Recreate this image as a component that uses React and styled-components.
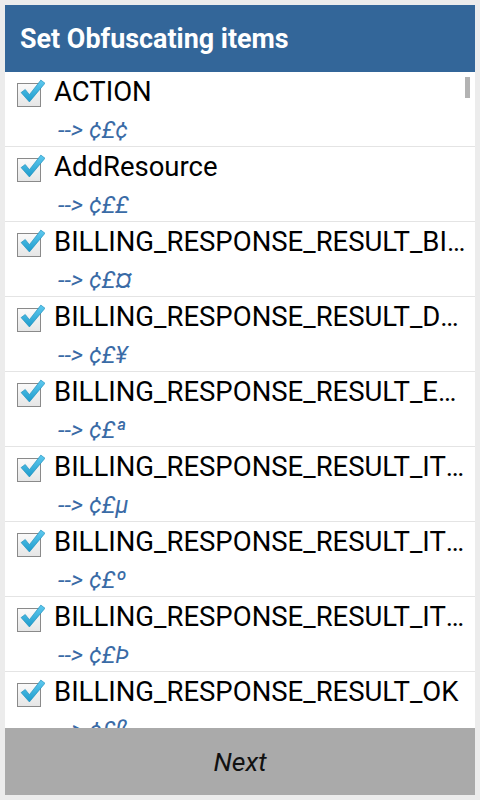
import React from "react";
import styled, { createGlobalStyle } from "styled-components";

const Global = createGlobalStyle`
  html, body { margin: 0; padding: 0; background: #ececec; }
  body { font-family: Roboto, "Noto Sans", sans-serif; }
`;

const Screen = styled.div`
  width: 480px;
  height: 800px;
  box-sizing: border-box;
  padding: 5px;
  display: flex;
  flex-direction: column;
  background: #ececec;
`;

const Header = styled.div`
  height: 67px;
  flex: none;
  background: #336699;
  color: #fff;
  font-weight: 700;
  font-size: 26.9px;
  display: flex;
  align-items: center;
  padding-left: 15px;
  padding-top: 1px;
  box-sizing: border-box;
`;

const ListWrap = styled.div`
  position: relative;
  flex: 1;
  background: #fff;
  overflow: hidden;
`;

const Thumb = styled.div`
  position: absolute;
  right: 5px;
  top: 5px;
  width: 5px;
  height: 21px;
  background: #b3b3b3;
`;

const Row = styled.div`
  height: 74px;
  border-bottom: 1px solid #e4e4e4;
  display: grid;
  grid-template-columns: 49px 1fr;
  grid-template-rows: 38px auto;
  padding-right: 8px;
`;

const Box = styled.div`
  grid-row: 1;
  grid-column: 1;
  position: relative;
  margin: 11px 0 0 12px;
  width: 22px;
  height: 22px;
  border: 1px solid #8a8a8a;
  background: linear-gradient(#fafafa, #e6e6e6);
`;

const Check = styled.svg`
  position: absolute;
  left: 1px;
  top: -6px;
  width: 26px;
  height: 25px;
`;

const Title = styled.div`
  grid-row: 1;
  grid-column: 2;
  font-size: 27.5px;
  color: #000;
  line-height: 38px;
  padding-top: 1px;
  white-space: nowrap;
  overflow: hidden;
  text-overflow: ellipsis;
`;

const Sub = styled.div`
  grid-row: 2;
  grid-column: 2;
  padding-left: 4px;
  padding-top: 6px;
  font-size: 24px;
  font-style: italic;
  color: #3a6ba6;
  line-height: 28px;
`;

const NextButton = styled.div`
  height: 67px;
  flex: none;
  background: #aaaaaa;
  display: flex;
  align-items: center;
  justify-content: center;
  font-size: 26.5px;
  font-style: italic;
  color: #111;
`;

const items = [
  ["ACTION", "¢"],
  ["AddResource", "£"],
  ["BILLING_RESPONSE_RESULT_BILLING_UNAVAILABLE", "¤"],
  ["BILLING_RESPONSE_RESULT_DEVELOPER_ERROR", "¥"],
  ["BILLING_RESPONSE_RESULT_ERROR", "ª"],
  ["BILLING_RESPONSE_RESULT_ITEM_ALREADY_OWNED", "µ"],
  ["BILLING_RESPONSE_RESULT_ITEM_NOT_OWNED", "º"],
  ["BILLING_RESPONSE_RESULT_ITEM_UNAVAILABLE", "Þ"],
  ["BILLING_RESPONSE_RESULT_OK", "ß"],
];

function CheckMark() {
  return (
    <Check viewBox="0 0 25 24">
      <defs>
        <linearGradient id="cg" x1="0" y1="0" x2="0" y2="1">
          <stop offset="0" stopColor="#5fcaf0" />
          <stop offset="1" stopColor="#1f9ccc" />
        </linearGradient>
      </defs>
      <path
        d="M2 14 L6 11 L10 16 L21 2 L25 5 L10 23 Z"
        fill="url(#cg)"
        stroke="#1a8dba"
        strokeWidth="0.6"
        strokeLinejoin="round"
      />
    </Check>
  );
}

export default function App() {
  return (
    <>
      <Global />
      <Screen>
        <Header>Set Obfuscating items</Header>
        <ListWrap>
          {items.map(([name, g]) => (
            <Row key={name}>
              <Box>
                <CheckMark />
              </Box>
              <Title>{name}</Title>
              <Sub>--&gt; ¢£{g}</Sub>
            </Row>
          ))}
          <Thumb />
        </ListWrap>
        <NextButton>Next</NextButton>
      </Screen>
    </>
  );
}
